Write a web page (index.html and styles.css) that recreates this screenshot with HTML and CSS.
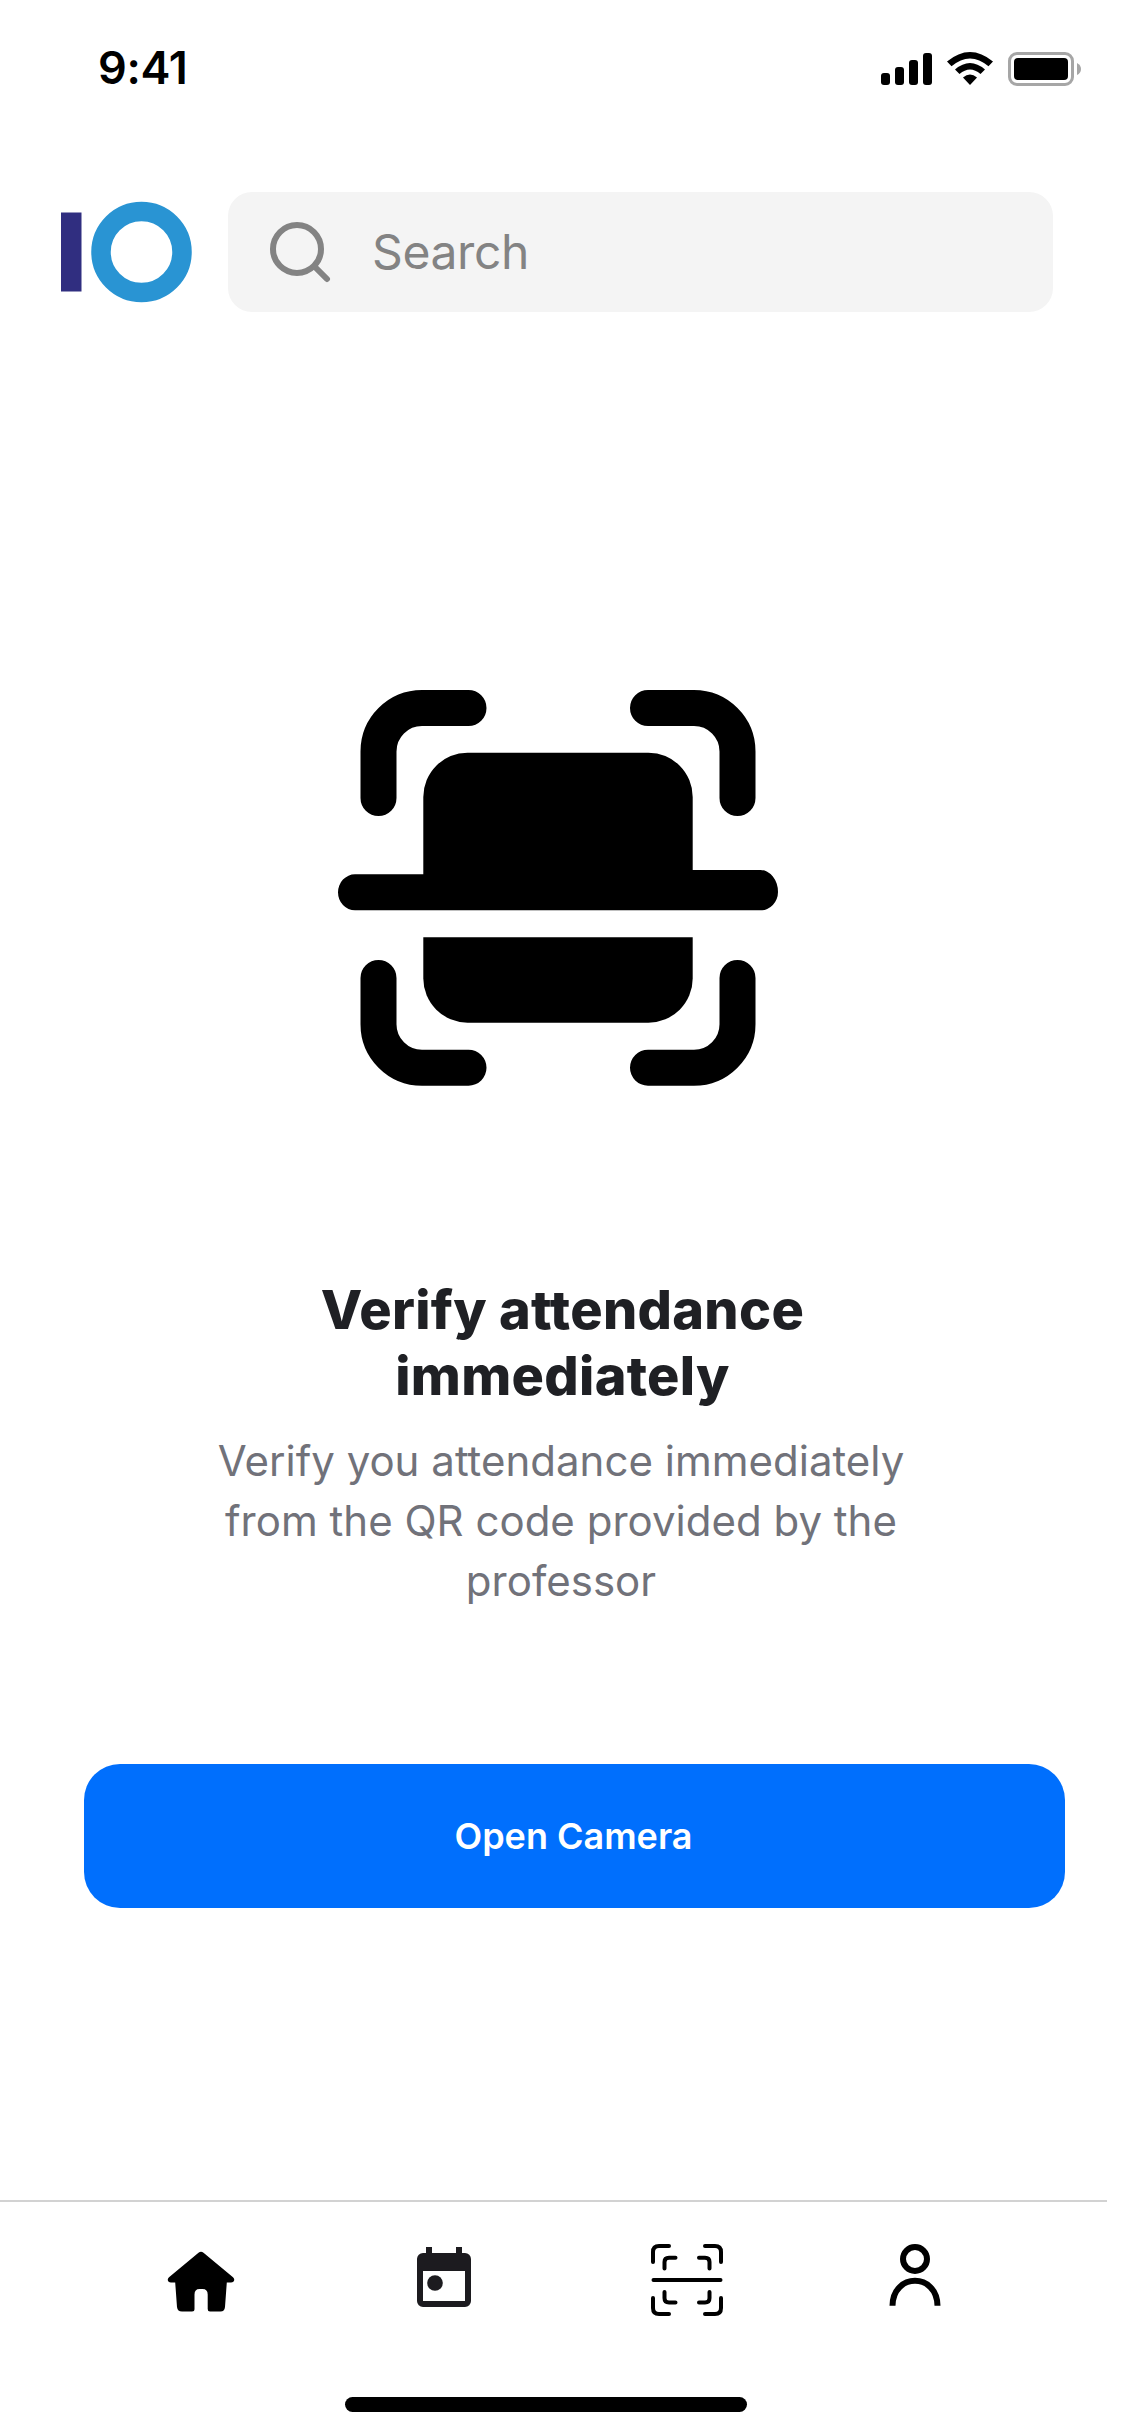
FILE: index.html
```html
<!DOCTYPE html>
<html lang="en">
<head>
<meta charset="utf-8">
<title>Verify attendance</title>
<link rel="stylesheet" href="styles.css">
</head>
<body>
<div class="screen">
  <header class="status">
    <span class="time">9:41</span>
    <svg class="status-icons" width="202" height="36" viewBox="0 0 202 36">
      <rect x="0" y="21" width="9" height="12" rx="3"/>
      <rect x="14" y="15" width="9" height="18" rx="3"/>
      <rect x="28" y="8" width="9" height="25" rx="3"/>
      <rect x="42" y="1" width="9" height="32" rx="3"/>
      <path d="M66 9.500Q89-9.500 112 9.500L107.500 14.300Q89-1.500 70.500 14.300Z"/>
      <path d="M74 17.500Q89 4.500 104 17.500L99.500 22Q89 13 78.500 22Z"/>
      <path d="M82 25.500Q89 19.500 96 25.500L89 33Z"/>
      <rect class="battery" x="128.500" y="1.500" width="63" height="31" rx="7.500"/>
      <rect x="133" y="6" width="54" height="22" rx="4"/>
      <path class="cap" d="M196 11Q200 13 200 17T196 23Z"/>
    </svg>
  </header>
  <div class="top">
    <svg class="logo" width="132" height="102" viewBox="0 0 132 102">
      <path fill="#302e80" d="M0 11.500h20.500V90.500H0z"/>
      <circle cx="80.500" cy="51" r="40.500" fill="none" stroke="#2994d3" stroke-width="19.500"/>
    </svg>
    <div class="search">
      <svg width="62" height="62" viewBox="0 0 62 62" fill="none" stroke="#838383" stroke-width="6" stroke-linecap="round">
        <circle cx="28" cy="28" r="24"/>
        <path d="M46 46l12 12"/>
      </svg>
      <span>Search</span>
    </div>
  </div>
  <main class="content">
    <svg class="scan" width="442" height="398" viewBox="0 0 442 398">
      <path class="bracket" d="M130.500 18H84A43.500 43.500 0 0 0 40.500 61.500V108M310 18h46A43.500 43.500 0 0 1 399.500 61.500V108M40.500 288v46.200A43.500 43.500 0 0 0 84 377.700h46.500M310 377.700h46A43.500 43.500 0 0 0 399.500 334.200V288"/>
      <path d="M85.300 184.300V107A44.300 44.300 0 0 1 129.600 62.700H310.400A44.300 44.300 0 0 1 354.700 107V180H422.500A17.500 22 0 0 1 440 202A17.500 18.300 0 0 1 422.500 220.300H17A17 18 0 0 1 17 184.300Z"/>
      <path d="M85.300 247.300H354.700V288.400A44.300 44.300 0 0 1 310.400 332.700H129.600A44.300 44.300 0 0 1 85.300 288.400Z"/>
    </svg>
    <h1>Verify attendance<br>immediately</h1>
    <p>Verify you attendance immediately<br>from the QR code provided by the<br>professor</p>
    <button class="camera">Open Camera</button>
  </main>
  <nav class="tabs">
    <svg class="tab-home" width="72" height="72" viewBox="0 0 72 72">
      <path d="M33.500 4.800Q36 2.800 38.500 4.800L68 29.200C70.500 31.500 69 34.500 66 34.500H61.800L60 59Q59.500 63.500 55.500 63.500H45Q42.700 63.500 42.700 61V46.500Q42.700 41 37.500 41H34.500Q29.500 41 29.500 46.500V61Q29.500 63.500 27 63.500H17Q12.500 63.500 12 59L10.200 34.500H6C3 34.500 1.500 31.500 4 29.200Z"/>
    </svg>
    <svg class="tab-calendar" width="72" height="72" viewBox="0 0 24 24" fill="#1c1b1f">
      <path d="M5 22q-.825 0-1.413-.587Q3 20.825 3 20V6q0-.825.587-1.413Q4.175 4 5 4h1V2h2v2h8V2h2v2h1q.825 0 1.413.587Q21 5.175 21 6v14q0 .825-.587 1.413Q19.825 22 19 22zm0-2h14V10H5z"/>
      <circle cx="9" cy="14" r="2.600"/>
    </svg>
    <svg width="72" height="72" viewBox="0 0 72 72" fill="none" stroke="#000" stroke-width="4" stroke-linecap="round">
      <path d="M2 18V8Q2 2 8 2H18M54 2H64Q70 2 70 8V18M2 54V64Q2 70 8 70H18M54 70H64Q70 70 70 64V54M2.500 36H69.500M13.500 24.500V18Q13.500 13.700 18 13.700H24.500M48 13.700H54Q58.500 13.700 58.500 18V24.500M13.500 48V54Q13.500 58.500 18 58.500H24.500M48 58.500H54Q58.500 58.500 58.500 54V48"/>
    </svg>
    <svg class="tab-profile" width="54" height="72" viewBox="0 0 54 72" fill="none" stroke="#000" stroke-width="6">
      <circle cx="27" cy="15" r="12"/>
      <path d="M4.500 61.700C5 28.500 49 28.500 49.500 61.700"/>
    </svg>
  </nav>
  <div class="home-bar"></div>
</div>
</body>
</html>
```
FILE: styles.css
```css
* { box-sizing: border-box; }
body { margin: 0; background: #fff; font-family: Inter, "Liberation Sans", sans-serif; }
svg { display: block; flex: none; }
.screen { width: 1125px; height: 2436px; display: flex; flex-direction: column; }
.status { height: 192px; padding: 40px 42px 0 98px; display: flex; justify-content: space-between; align-items: flex-start; }
.time { font-size: 45px; line-height: 56px; font-weight: 600; letter-spacing: -0.3px; }
.status-icons { margin-top: 12px; }
.battery { fill: none; stroke: #a6a6a6; stroke-width: 3; }
.cap { fill: #a6a6a6; }
.top { padding: 0 72px 0 61px; display: flex; align-items: center; gap: 35px; }
.search { flex: 1; height: 120px; padding-left: 41px; display: flex; align-items: center; gap: 41px; border-radius: 24px; background: #f4f4f4; color: #838383; font-size: 48px; line-height: 60px; letter-spacing: -0.4px; }
.content { display: flex; flex-direction: column; align-items: center; padding-top: 378px; }
.scan { margin-right: 7px; }
.bracket { fill: none; stroke: #000; stroke-width: 36; stroke-linecap: round; }
h1 { margin: 189px 0 0; font-size: 54px; line-height: 66px; font-weight: 800; letter-spacing: 0.3px; text-align: center; color: #1f2024; }
p { margin: 22px 3px 0 0; font-size: 42px; line-height: 60px; letter-spacing: 0.01px; text-align: center; color: #71727a; }
.camera { margin: 153px 0 0 24px; width: 981px; height: 144px; padding: 0 2px 0 0; border: 0; border-radius: 36px; background: #006ffd; color: #fff; font: 600 36px/45px Inter, sans-serif; }
.tabs { width: 1107px; margin-top: 292px; height: 180px; padding: 42px 0 0 165px; display: flex; gap: 171px; border-top: 2px solid #d2d2d2; }
.tab-home { margin-top: 4px; }
.tab-calendar { margin-top: -3px; }
.tab-profile { margin-left: -6px; }
.home-bar { margin: 17px 0 0 345px; width: 402px; height: 15px; border-radius: 8px; background: #000; }
```
